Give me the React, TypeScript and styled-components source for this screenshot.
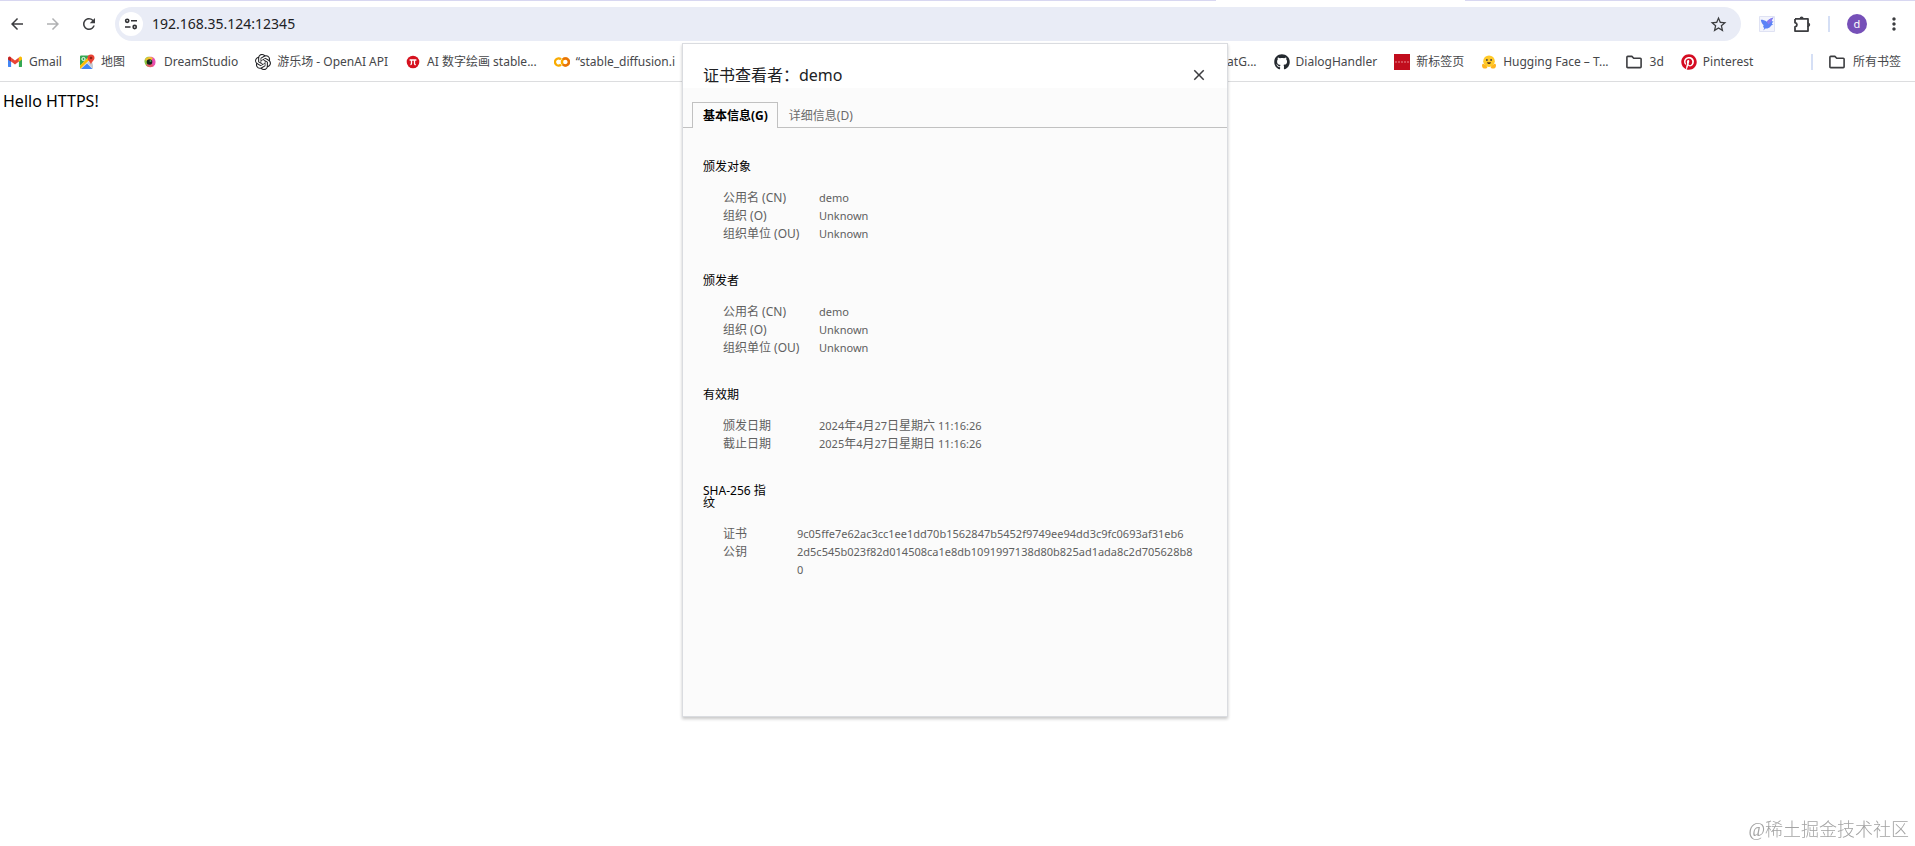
import React from "react";
import styled, { createGlobalStyle } from "styled-components";
import {
  MdArrowBack,
  MdArrowForward,
  MdRefresh,
  MdStarBorder,
  MdMoreVert,
  MdClose,
} from "react-icons/md";
import { FaGithub, FaPinterest } from "react-icons/fa";
import { SiOpenai } from "react-icons/si";

const Global = createGlobalStyle`
  *, *::before, *::after { box-sizing: border-box; }
  body {
    margin: 0;
    min-height: 100vh;
    background: #fff;
    color: #202124;
    font-family: "Noto Sans", "Noto Sans CJK SC", sans-serif;
    font-size: 12px;
  }
  button, input { font: inherit; color: inherit; }
  svg { display: block; flex: none; }
`;

/* ---------- browser frame ---------- */

const TabEdge = styled.div`
  display: grid;
  grid-template-columns: 1216fr 249fr 450fr;
  height: 1px;
`;

const EdgePart = styled.span<{ $active?: boolean }>`
  background: ${(p) => (p.$active ? "#fff" : "#d8d7f1")};
`;

const Toolbar = styled.div`
  display: flex;
  align-items: center;
  height: 46px;
  padding: 0 13px 0 8px;
`;

const NavButtons = styled.div`
  display: flex;
  gap: 18px;
  margin-right: 17px;
`;

const IconButton = styled.button<{ $muted?: boolean }>`
  display: grid;
  place-items: center;
  width: 18px;
  height: 20px;
  padding: 0;
  border: 0;
  background: none;
  color: ${(p) => (p.$muted ? "#b0b1b3" : "#3c3d40")};
`;

const AddressBar = styled.div`
  display: flex;
  flex: 1;
  align-items: center;
  height: 34px;
  padding: 0 14px 0 4px;
  border-radius: 17px;
  background: #e9ecf6;
`;

const SiteButton = styled.button`
  display: grid;
  place-items: center;
  width: 24px;
  height: 24px;
  padding: 0;
  border: 0;
  border-radius: 50%;
  background: #fff;
`;

const AddressInput = styled.input`
  flex: 1;
  min-width: 0;
  margin-left: 9px;
  padding: 0;
  border: 0;
  outline: 0;
  background: none;
  font-size: 14px;
  line-height: 20px;
`;

const ToolbarActions = styled.div`
  display: flex;
  align-items: center;
  gap: 17px;
  margin-left: 17px;
`;

const Divider = styled.span`
  width: 2px;
  height: 16px;
  background: #d5dff5;
`;

const Avatar = styled.button`
  width: 20px;
  height: 20px;
  padding: 0;
  border: 0;
  border-radius: 50%;
  background: #7650b8;
  color: #fff;
  font-size: 11px;
  line-height: 20px;
`;

const BookmarkBar = styled.nav`
  display: flex;
  align-items: center;
  gap: 17px;
  height: 35px;
  padding: 0 14px 4px 7px;
  border-bottom: 1px solid #dcdddf;
  overflow: hidden;
`;

const Bookmark = styled.a<{ $wide?: boolean }>`
  display: flex;
  flex: none;
  align-items: center;
  gap: ${(p) => (p.$wide ? 8 : 6)}px;
  color: #46474a;
  line-height: 18px;
  text-decoration: none;
  white-space: nowrap;
`;

const CoveredBookmarks = styled.span`
  flex: 0 0 518px;
`;

const BarEnd = styled.div`
  display: flex;
  flex: none;
  align-items: center;
  gap: 16px;
  margin-left: auto;
`;

const PageBody = styled.main`
  padding: 8px 3px;
  color: #000;
  font-size: 16px;
  line-height: 22px;
`;

const Watermark = styled.span`
  position: fixed;
  right: 6px;
  bottom: 3px;
  color: #a3a3a3;
  font-family: "Liberation Serif", "Noto Sans CJK SC", serif;
  font-size: 18px;
  font-weight: 300;
  line-height: 26px;
`;

/* ---------- certificate dialog ---------- */

const Overlay = styled.div`
  position: absolute;
  top: 43px;
  left: 0;
  right: 5px;
  display: flex;
  justify-content: center;
  pointer-events: none;
`;

const Dialog = styled.section`
  width: 546px;
  min-height: 674px;
  border: 1px solid #dadce0;
  background: #fbfbfb;
  box-shadow: 0 2px 3px rgba(0, 0, 0, 0.22);
  pointer-events: auto;
`;

const DialogHeader = styled.header`
  display: flex;
  align-items: center;
  justify-content: space-between;
  height: 44px;
  padding: 18px 19px 0 20px;
  background: #fff;
`;

const DialogTitle = styled.h1`
  margin: 0;
  font-size: 16px;
  font-weight: 400;
  line-height: 22px;
`;

const TabList = styled.div`
  display: flex;
  height: 40px;
  padding: 14px 9px 0;
  border-bottom: 1px solid #c1c1c1;
`;

const Tab = styled.button<{ $selected?: boolean }>`
  height: 26px;
  padding: 0 9px 0 10px;
  border: 1px solid ${(p) => (p.$selected ? "#c1c1c1" : "transparent")};
  border-bottom: 0;
  background: ${(p) => (p.$selected ? "#fbfbfb" : "transparent")};
  color: ${(p) => (p.$selected ? "#000" : "#6b6b6b")};
  font-size: 12px;
  font-weight: ${(p) => (p.$selected ? 700 : 400)};
  line-height: 24px;
`;

const Panel = styled.div`
  display: flex;
  flex-direction: column;
  gap: 32px;
  padding: 33px 24px 32px 20px;
`;

const GroupTitle = styled.h2`
  width: 70px;
  margin: 0 0 16px;
  color: #000;
  font-size: 12px;
  font-weight: 400;
  line-height: 12px;
`;

const Fields = styled.dl<{ $labelWidth: number }>`
  display: grid;
  grid-template-columns: ${(p) => p.$labelWidth}px 1fr;
  margin: 0;
  padding-left: 20px;
  color: #606060;
  line-height: 18px;
`;

const Label = styled.dt`
  white-space: nowrap;
`;

const Value = styled.dd`
  min-width: 0;
  margin: 0;
  font-size: 11px;
  word-break: break-all;
`;

const Fingerprint = styled(Value)`
  padding-right: 6px;
`;

const Han = styled.span`
  font-size: 12px;
`;

/* Values set their Latin text one size below the Chinese characters. */
function MixedText({ text }: { text: string }) {
  return (
    <>
      {text.split(/([\u4e00-\u9fff]+)/).map((part, i) =>
        i % 2 ? <Han key={i}>{part}</Han> : part
      )}
    </>
  );
}

/* ---------- icons ---------- */

const GmailIcon = () => (
  <svg width="16" height="16" viewBox="0 0 16 16">
    <path d="M1 4v8.2c0 .5.4.9.9.9h2.2V7.2z" fill="#4285f4" />
    <path d="M11.900 7.200v5.900h2.200c.5 0 .9-.4.9-.9V4z" fill="#34a853" />
    <path d="M4.100 3.400v4.200L8 10.600l3.900-3V3.400L8 6.400z" fill="#ea4335" />
    <path d="M1 4.300v1.100l3.100 2.300V3.400l-.8-.6C2.300 2.100 1 2.900 1 4.300z" fill="#c5221f" />
    <path d="M15 4.300v1.100l-3.100 2.300V3.400l.8-.6c1-.7 2.300.1 2.300 1.500z" fill="#fbbc04" />
  </svg>
);

const MapsIcon = () => (
  <svg width="16" height="16" viewBox="0 0 16 16">
    <path d="M2 1.500h9L1 12V2.500a1 1 0 0 1 1-1z" fill="#34a853" />
    <path d="M1 12 9 4l5 5v5a1 1 0 0 1-1 1H2a1 1 0 0 1-1-1z" fill="#dfe3e8" />
    <path d="m2 15 6-5.500 5.500 5.500z" fill="#4285f4" />
    <path d="m1 11.500 8-8 1.800 2L1 15z" fill="#fbbc04" />
    <path d="m8.500 9 2-2 3.500 4v3.500z" fill="#c7cbd1" />
    <circle cx="4.500" cy="5" r="1.600" fill="none" stroke="#fff" />
    <path d="M12 .5a3.500 3.500 0 0 0-3.500 3.500c0 2.500 2.800 3.200 3.500 6.500.7-3.300 3.500-4 3.500-6.500A3.500 3.500 0 0 0 12 .5z" fill="#ea4335" />
    <circle cx="12" cy="4" r="1.300" fill="#8c2018" />
  </svg>
);

const DreamIcon = () => (
  <svg width="16" height="16" viewBox="0 0 16 16">
    <path d="M8 3C5 2 2 4.500 2.500 8S5.500 13.500 8 13z" fill="#8cc63f" />
    <path d="M7 3c3-.8 6.500 1 6.500 5S10.500 13.800 7 13z" fill="#e84fb0" />
    <path d="M3 6c1-3 5-3.800 8-2L8 8z" fill="#f2c230" />
    <path d="M4 11c2 2.600 5 2.600 7.500 1L8 8z" fill="#e45b6a" />
    <circle cx="7.500" cy="8" r="2.800" fill="#15251b" />
    <circle cx="8.500" cy="7" r="1" fill="#49a05c" />
  </svg>
);

const PiIcon = () => (
  <svg width="16" height="16" viewBox="0 0 16 16">
    <circle cx="8" cy="8" r="6.300" fill="#d6121f" />
    <path d="M4.600 6h6.800M6.500 6v3.200c0 .9-.4 1.400-1.100 1.400M9.500 6v3.600c0 .8.5 1.100 1.300.9" fill="none" stroke="#fff" strokeWidth="1.300" />
  </svg>
);

const ColabIcon = () => (
  <svg width="16" height="16" viewBox="0 0 16 16" fill="none" strokeWidth="2.400">
    <path d="M7 5.300a3.600 3.600 0 1 0 0 5.400" stroke="#f9ab00" />
    <circle cx="11.400" cy="8" r="3.500" stroke="#f9ab00" />
    <path d="M9 5.500a3.500 3.500 0 1 1 0 5" stroke="#e8710a" />
  </svg>
);

const RedSiteIcon = () => (
  <svg width="16" height="16" viewBox="0 0 16 16">
    <path d="M0 0h16v16H0z" fill="#c10d1d" />
    <path d="M1 8h14" stroke="#e88a90" strokeDasharray="2 1" />
  </svg>
);

const HuggingIcon = () => (
  <svg width="16" height="16" viewBox="0 0 16 16">
    <circle cx="8" cy="7.200" r="5.800" fill="#ffc928" />
    <path d="M1 11.500c0-2 1.500-2.500 2.500-1l2.500 2c1 1.500-.5 2-2 2S1 14 1 11.500zM15 11.500c0-2-1.500-2.500-2.500-1l-2.500 2c-1 1.500.5 2 2 2s3-.5 3-3z" fill="#ffb41f" />
    <circle cx="5.900" cy="6" r=".9" fill="#3a3b45" />
    <circle cx="10.100" cy="6" r=".9" fill="#3a3b45" />
    <path d="M6 8.300h4c0 2.400-4 2.400-4 0z" fill="#5b3a20" />
  </svg>
);

const FolderIcon = () => (
  <svg width="16" height="16" viewBox="0 0 16 16" fill="none" stroke="#3c3d40" strokeWidth="1.600" strokeLinejoin="round">
    <path d="M.9 3.200c0-.5.3-.8.8-.8h4.200l1.800 1.900h6.600c.5 0 .8.300.8.8v7.700c0 .5-.3.8-.8.8H1.700c-.5 0-.8-.3-.8-.8z" />
  </svg>
);

const PuzzleIcon = () => (
  <svg width="18" height="18" viewBox="0 0 18 18" fill="none" stroke="#3c3d40" strokeWidth="1.800" strokeLinejoin="round">
    <path d="M2 3.900h13v4.300M15 11v5.100H2v-4.200c2.600-.5 2.600-3.700 0-4.200V3.900" />
    <path d="M6.600 3.500a2 2 0 0 1 4 0zM15.200 7.700a2 2 0 0 1 0 4z" fill="#3c3d40" stroke="none" />
    <path d="M15 7.500v4.500" />
  </svg>
);

const TuneIcon = () => (
  <svg width="14" height="14" viewBox="0 0 14 14" fill="none" stroke="#303134" strokeWidth="1.600">
    <circle cx="3.200" cy="3.800" r="1.600" />
    <path d="M7 3.800h6M1 10h5.500" />
    <circle cx="10.700" cy="10" r="1.600" />
  </svg>
);

const BirdIcon = () => (
  <svg width="16" height="16" viewBox="0 0 16 16">
    <path d="M.5.5h15v15H.5z" fill="#f3f4fc" stroke="#dfe2f3" />
    <path d="M1.800 3.800c2.200 0 4.200.6 6 2C8.800 4 11.500 2.200 14.500 1.500c-1.200 1.300-1.700 2.500-1.900 3.800l2 .2c-1 .6-1.300 1.200-1.700 2.200l1.400.8c-1.400.3-2 1-2.800 1.900-1.300 1.500-3 2.200-5 2l-2.300 2c.3-.9.9-1.600 1.100-2.400-1.200-.8-1.500-2-.6-2.800C3.200 8.200 2.200 6.300 1.800 3.800z" fill="#5b82f6" />
    <path d="M7.800 5.800C8.800 4 11.500 2.200 14.500 1.500c-1.200 1.300-1.700 2.500-1.900 3.800L9.500 8.500z" fill="#8b7bf0" />
  </svg>
);

/* ---------- data ---------- */

const leftBookmarks = [
  { label: "Gmail", icon: <GmailIcon /> },
  { label: "地图", icon: <MapsIcon /> },
  { label: "DreamStudio", icon: <DreamIcon /> },
  { label: "游乐场 - OpenAI API", icon: <SiOpenai size={16} color="#202124" /> },
  { label: "AI 数字绘画 stable...", icon: <PiIcon /> },
  { label: "“stable_diffusion.i", icon: <ColabIcon /> },
];

const rightBookmarks = [
  { label: "atG..." },
  { label: "DialogHandler", icon: <FaGithub size={16} color="#24292f" /> },
  { label: "新标签页", icon: <RedSiteIcon /> },
  { label: "Hugging Face – T...", icon: <HuggingIcon /> },
  { label: "3d", icon: <FolderIcon />, wide: true },
  { label: "Pinterest", icon: <FaPinterest size={16} color="#d50c22" /> },
];

const groups = [
  {
    title: "颁发对象",
    labelWidth: 96,
    rows: [
      ["公用名 (CN)", "demo"],
      ["组织 (O)", "Unknown"],
      ["组织单位 (OU)", "Unknown"],
    ],
  },
  {
    title: "颁发者",
    labelWidth: 96,
    rows: [
      ["公用名 (CN)", "demo"],
      ["组织 (O)", "Unknown"],
      ["组织单位 (OU)", "Unknown"],
    ],
  },
  {
    title: "有效期",
    labelWidth: 96,
    rows: [
      ["颁发日期", "2024年4月27日星期六 11:16:26"],
      ["截止日期", "2025年4月27日星期日 11:16:26"],
    ],
  },
  {
    title: "SHA-256 指纹",
    labelWidth: 74,
    fingerprint: true,
    rows: [
      ["证书", "9c05ffe7e62ac3cc1ee1dd70b1562847b5452f9749ee94dd3c9fc0693af31eb6"],
      ["公钥", "2d5c545b023f82d014508ca1e8db1091997138d80b825ad1ada8c2d705628b80"],
    ],
  },
];

export default function App() {
  return (
    <>
      <Global />
      <TabEdge>
        <EdgePart />
        <EdgePart $active />
        <EdgePart />
      </TabEdge>
      <Toolbar>
        <NavButtons>
          <IconButton aria-label="后退"><MdArrowBack size={18} /></IconButton>
          <IconButton aria-label="前进" $muted><MdArrowForward size={18} /></IconButton>
          <IconButton aria-label="重新加载"><MdRefresh size={18} /></IconButton>
        </NavButtons>
        <AddressBar>
          <SiteButton aria-label="网站信息"><TuneIcon /></SiteButton>
          <AddressInput aria-label="地址" defaultValue="192.168.35.124:12345" />
          <IconButton aria-label="收藏"><MdStarBorder size={19} /></IconButton>
        </AddressBar>
        <ToolbarActions>
          <IconButton aria-label="翻译"><BirdIcon /></IconButton>
          <IconButton aria-label="扩展程序"><PuzzleIcon /></IconButton>
          <Divider />
          <Avatar aria-label="个人资料">d</Avatar>
          <IconButton aria-label="菜单"><MdMoreVert size={20} /></IconButton>
        </ToolbarActions>
      </Toolbar>
      <BookmarkBar>
        {leftBookmarks.map((b) => (
          <Bookmark key={b.label} href="#">{b.icon}{b.label}</Bookmark>
        ))}
        <CoveredBookmarks />
        {rightBookmarks.map((b) => (
          <Bookmark key={b.label} href="#" $wide={b.wide}>{b.icon}{b.label}</Bookmark>
        ))}
        <BarEnd>
          <Divider />
          <Bookmark href="#" $wide><FolderIcon />所有书签</Bookmark>
        </BarEnd>
      </BookmarkBar>
      <PageBody>Hello HTTPS!</PageBody>

      <Overlay>
        <Dialog role="dialog" aria-labelledby="cert-title">
          <DialogHeader>
            <DialogTitle id="cert-title">证书查看者：demo</DialogTitle>
            <IconButton aria-label="关闭"><MdClose size={18} /></IconButton>
          </DialogHeader>
          <TabList role="tablist">
            <Tab role="tab" aria-selected $selected>基本信息(G)</Tab>
            <Tab role="tab" aria-selected={false}>详细信息(D)</Tab>
          </TabList>
          <Panel role="tabpanel">
            {groups.map((g) => {
              const Cell = g.fingerprint ? Fingerprint : Value;
              return (
                <div key={g.title}>
                  <GroupTitle>{g.title}</GroupTitle>
                  <Fields $labelWidth={g.labelWidth}>
                    {g.rows.map(([label, value]) => (
                      <React.Fragment key={label}>
                        <Label>{label}</Label>
                        <Cell><MixedText text={value} /></Cell>
                      </React.Fragment>
                    ))}
                  </Fields>
                </div>
              );
            })}
          </Panel>
        </Dialog>
      </Overlay>
      <Watermark>@稀土掘金技术社区</Watermark>
    </>
  );
}
